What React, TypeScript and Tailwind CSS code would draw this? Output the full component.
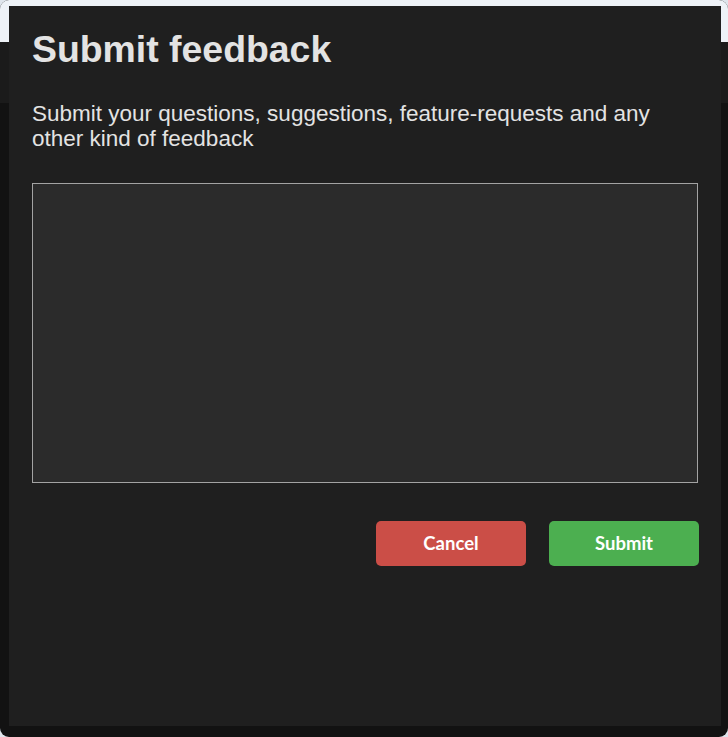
export default function App() {
  return (
    <div className="h-[737px] w-full bg-[#dfe5ec] overflow-hidden">
      <div className="relative h-full w-full overflow-hidden rounded-[9px] bg-[#121212]">
        {/* browser chrome + app header behind the backdrop */}
        <div className="h-[42px] bg-[#eef2f7]" />
        <div className="h-[61px] bg-[#1b1b1b]" />

        {/* feedback dialog */}
        <div className="absolute left-[9px] top-[6px] flex h-[720px] w-[712px] flex-col bg-[#1f1f1f] px-[23px] pt-[23px] font-['Liberation_Sans',Arial,sans-serif] text-[#e3e3e3]">
          <h2 className="text-[37.4px] font-bold leading-[41.6px]">
            Submit feedback
          </h2>
          <p className="mt-[30px] text-[22.5px] leading-[25.7px]">
            Submit your questions, suggestions, feature-requests and any other
            kind of feedback
          </p>
          <textarea className="mt-[31px] block h-[300px] w-full resize-none border border-[#a3a3a3] bg-[#2b2b2b] p-2 text-[16px] text-[#e3e3e3] outline-none" />
          <div className="-mr-[1px] mt-[38px] flex justify-end gap-[23px] font-['Lato',sans-serif] text-[18.5px] font-bold text-white">
            <button className="h-[45px] w-[150px] rounded-[5px] bg-[#cb4e47]">
              Cancel
            </button>
            <button className="h-[45px] w-[150px] rounded-[5px] bg-[#4caf50]">
              Submit
            </button>
          </div>
        </div>
      </div>
    </div>
  );
}
